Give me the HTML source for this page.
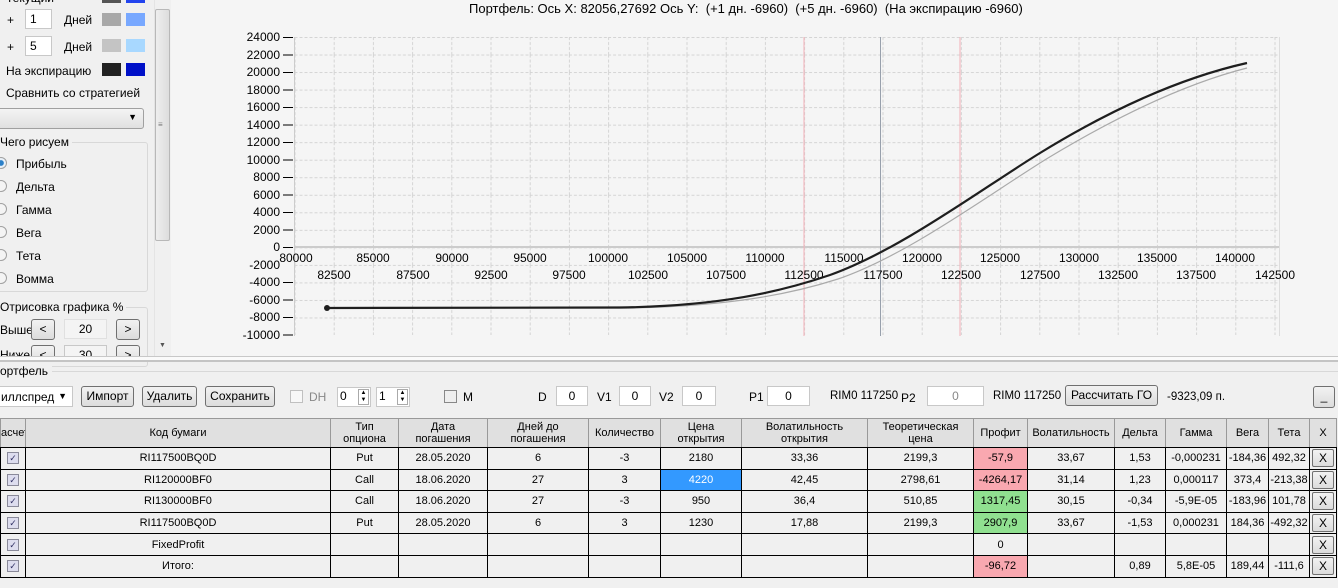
<!DOCTYPE html>
<html><head><meta charset="utf-8"><style>
*{box-sizing:border-box;margin:0;padding:0}
body{width:1338px;height:588px;overflow:hidden;background:#f0f0f0;font-family:"Liberation Sans",sans-serif;font-size:12px;color:#000;position:relative}
.a{position:absolute}
.sw{position:absolute;width:19px;height:13px}
.inp{position:absolute;background:#fff;border:1px solid #c8c8c8;height:20px;font-size:12px;padding:2px 4px}
.btn{position:absolute;border:1px solid #707070;border-radius:3px;background:linear-gradient(#f2f2f2,#dcdcdc);height:21px;font-size:12px;text-align:center;line-height:19px}
.rad{position:absolute;width:12px;height:12px;border:1px solid #a0a0a0;border-radius:50%;background:#f4f4f4}
table{position:absolute;left:0;top:418px;border-collapse:collapse;table-layout:fixed;font-size:11px}
td,th{border:1px solid #000;text-align:center;height:21.6px;background:#f0f0f0;font-weight:normal;overflow:hidden;white-space:nowrap;padding:0}
th{background:#e0e0e0;height:29px;line-height:12px;border-color:#999 #999 #000 #999}
.cb{display:inline-block;width:12px;height:12px;border:1px solid #8a8a9a;background:#dde;font-size:9px;line-height:10px;color:#336}
.xb{display:inline-block;width:22px;height:18px;border:1px solid #707070;border-radius:2px;background:linear-gradient(#f2f2f2,#dcdcdc);line-height:16px;font-size:12px}
.r{background:#f9a8b0}.g{background:#90e090}.b{background:#3399ff;color:#fff}
</style></head><body>
<div class="a" style="left:0;top:0;width:155px;height:356px;background:#f0f0f0"></div>
<div class="a" style="left:6px;top:-9px">Текущий</div>
<div class="sw" style="left:102px;top:-10px;background:#555"></div><div class="sw" style="left:126px;top:-10px;background:#2244ee"></div>
<div class="a" style="left:7px;top:13px">+</div><div class="inp" style="left:25px;top:9px;width:27px">1</div><div class="a" style="left:64px;top:13px">Дней</div>
<div class="sw" style="left:102px;top:13px;background:#a8a8a8"></div><div class="sw" style="left:126px;top:13px;background:#78a8ff"></div>
<div class="a" style="left:7px;top:40px">+</div><div class="inp" style="left:25px;top:36px;width:27px">5</div><div class="a" style="left:64px;top:40px">Дней</div>
<div class="sw" style="left:102px;top:39px;background:#c4c4c4"></div><div class="sw" style="left:126px;top:39px;background:#a8d8ff"></div>
<div class="a" style="left:6px;top:64px">На экспирацию</div>
<div class="sw" style="left:102px;top:63px;background:#222"></div><div class="sw" style="left:126px;top:63px;background:#0010c8"></div>
<div class="a" style="left:6px;top:86px">Сравнить со стратегией</div>
<div class="a" style="left:-3px;top:108px;width:147px;height:21px;border:1px solid #a0a0a0;border-radius:3px;background:linear-gradient(#f4f4f4,#e0e0e0)"><span class="a" style="right:6px;top:3px;font-size:9px">▼</span></div>
<div class="a" style="left:-3px;top:142px;width:151px;height:150px;border:1px solid #d8d8d8;border-radius:3px"></div>
<div class="a" style="left:0;top:135px;background:#f0f0f0;padding-right:3px">Чего рисуем</div>
<div class="rad" style="left:-5px;top:157px;background:radial-gradient(#2a7fc8 35%,#e8f0f8 45%)"></div><div class="a" style="left:16px;top:157px">Прибыль</div>
<div class="rad" style="left:-5px;top:180px"></div><div class="a" style="left:16px;top:180px">Дельта</div>
<div class="rad" style="left:-5px;top:203px"></div><div class="a" style="left:16px;top:203px">Гамма</div>
<div class="rad" style="left:-5px;top:226px"></div><div class="a" style="left:16px;top:226px">Вега</div>
<div class="rad" style="left:-5px;top:249px"></div><div class="a" style="left:16px;top:249px">Тета</div>
<div class="rad" style="left:-5px;top:272px"></div><div class="a" style="left:16px;top:272px">Вомма</div>
<div class="a" style="left:-3px;top:307px;width:151px;height:60px;border:1px solid #d8d8d8;border-radius:3px"></div>
<div class="a" style="left:0;top:300px;background:#f0f0f0;padding-right:3px">Отрисовка графика %</div>
<div class="a" style="left:0;top:323px">Выше</div><div class="btn" style="left:31px;top:319px;width:24px">&lt;</div><div class="inp" style="left:64px;top:319px;width:43px;text-align:center;background:#f4f4f4;border-color:#e0e0e0">20</div><div class="btn" style="left:116px;top:319px;width:24px">&gt;</div>
<div class="a" style="left:0;top:345px;height:11px;overflow:hidden;width:150px"><div class="a" style="top:3px">Ниже</div><div class="btn" style="left:31px;top:0;width:24px">&lt;</div><div class="inp" style="left:64px;top:0;width:43px;text-align:center;background:#f4f4f4">30</div><div class="btn" style="left:116px;top:0;width:24px">&gt;</div></div>
<div class="a" style="left:154px;top:0;width:17px;height:356px;background:#f0f0f0;border-left:1px solid #e4e4e4"></div>
<div class="a" style="left:155px;top:9px;width:15px;height:232px;border:1px solid #b8b8b8;border-radius:2px;background:linear-gradient(90deg,#eee,#ddd)"></div>
<div class="a" style="left:158px;top:120px;font-size:8px;color:#777">≡</div>
<div class="a" style="left:159px;top:342px;font-size:7px;color:#555">▼</div>
<div class="a" style="left:171px;top:0;width:1167px;height:356px;background:#f5f5f5"></div>
<div class="a" style="left:469px;top:1px;font-size:13px;white-space:pre">Портфель: Ось X: 82056,27692 Ось Y:  (+1 дн. -6960)  (+5 дн. -6960)  (На экспирацию -6960)</div>
<svg class="a" style="left:0;top:0" width="1338" height="356" font-family="Liberation Sans, sans-serif" font-size="12">
<defs><pattern id="gp" x="294.5" y="37" width="39.2" height="17.53" patternUnits="userSpaceOnUse">
<path d="M0.5 0V17.53M0 0.5H39.2" stroke="#d4d4d4" stroke-width="1" stroke-dasharray="3 2" fill="none"/></pattern></defs>
<rect x="294.5" y="37" width="985" height="298" fill="url(#gp)"/>
<line x1="294.5" y1="37" x2="294.5" y2="336" stroke="#ccc"/>
<line x1="294" y1="247" x2="1280" y2="247" stroke="#ccc" stroke-width="2"/>
<line x1="1279.5" y1="37" x2="1279.5" y2="336" stroke="#ddd"/>
<line x1="804" y1="37" x2="804" y2="336" stroke="#f4b0b8"/>
<line x1="960" y1="37" x2="960" y2="336" stroke="#f4b0b8"/>
<line x1="880.5" y1="37" x2="880.5" y2="336" stroke="#98a0ac"/>
<g text-anchor="end" fill="#000">
<text x="280" y="41">24000</text><text x="280" y="59">22000</text><text x="280" y="76">20000</text><text x="280" y="94">18000</text><text x="280" y="111">16000</text><text x="280" y="129">14000</text><text x="280" y="146">12000</text><text x="280" y="164">10000</text><text x="280" y="181">8000</text><text x="280" y="199">6000</text><text x="280" y="216">4000</text><text x="280" y="234">2000</text><text x="280" y="251">0</text><text x="280" y="269">-2000</text><text x="280" y="286">-4000</text><text x="280" y="304">-6000</text><text x="280" y="321">-8000</text><text x="280" y="339">-10000</text>
</g>
<path d="M283 37.5h10M283 55h10M283 72.5h10M283 90h10M283 107.5h10M283 125h10M283 142.5h10M283 160h10M283 177.5h10M283 195h10M283 212.5h10M283 230h10M283 247.5h10M283 282.5h10M283 300h10M283 317.5h10M283 335h10" stroke="#000"/>
<g text-anchor="middle">
<text x="296" y="262">80000</text><text x="373" y="262">85000</text><text x="452" y="262">90000</text><text x="530" y="262">95000</text><text x="608" y="262">100000</text><text x="687" y="262">105000</text><text x="765" y="262">110000</text><text x="844" y="262">115000</text><text x="922" y="262">120000</text><text x="1000" y="262">125000</text><text x="1079" y="262">130000</text><text x="1157" y="262">135000</text><text x="1235" y="262">140000</text>
<text x="334" y="279">82500</text><text x="413" y="279">87500</text><text x="491" y="279">92500</text><text x="569" y="279">97500</text><text x="648" y="279">102500</text><text x="726" y="279">107500</text><text x="804" y="279">112500</text><text x="883" y="279">117500</text><text x="961" y="279">122500</text><text x="1040" y="279">127500</text><text x="1118" y="279">132500</text><text x="1196" y="279">137500</text><text x="1275" y="279">142500</text>
</g>
<path fill="none" stroke="#aaa" stroke-width="1.2" d="M327,308 L630,308 C728,306 788,295 838,279 C908,255 988,195 1048,158 C1116,117 1184,84 1247,68"/>
<path fill="none" stroke="#1e1e1e" stroke-width="2.2" d="M327,308 L620,307.5 C720,306 780,292 830,275 C900,250 980,190 1040,153 C1110,110 1180,78 1247,63"/>
<circle cx="327" cy="308" r="3" fill="#1e1e1e"/>
</svg>
<div class="a" style="left:0;top:356px;width:1338px;height:6px;background:#fafafa;border-top:1px solid #c8c8c8;border-bottom:2px solid #c4c4c4"></div>
<div class="a" style="left:0;top:371px;width:1338px;border-top:1px solid #d8d8d8"></div>
<div class="a" style="left:0;top:364px;background:#f0f0f0;padding-right:4px">ортфель</div>
<div class="a" style="left:-3px;top:386px;width:76px;height:21px;border:1px solid #c8c8c8;background:#fff;padding:3px 0 0 3px">иллспред<span class="a" style="right:5px;top:4px;font-size:9px">▼</span></div>
<div class="btn" style="left:81px;top:386px;width:53px">Импорт</div>
<div class="btn" style="left:142px;top:386px;width:55px">Удалить</div>
<div class="btn" style="left:205px;top:386px;width:70px">Сохранить</div>
<div class="a" style="left:290px;top:390px;width:13px;height:13px;border:1px solid #c0c0c0;background:#f8f8f8"></div><div class="a" style="left:309px;top:390px;color:#888">DH</div>
<div class="inp" style="left:337px;top:387px;width:34px;padding:1px 2px">0<span class="a" style="right:1px;top:1px;width:11px;height:16px;border:1px solid #aaa;font-size:6px;line-height:7px;text-align:center">▲<br>▼</span></div>
<div class="inp" style="left:376px;top:387px;width:34px;padding:1px 2px">1<span class="a" style="right:1px;top:1px;width:11px;height:16px;border:1px solid #aaa;font-size:6px;line-height:7px;text-align:center">▲<br>▼</span></div>
<div class="a" style="left:444px;top:390px;width:13px;height:13px;border:1px solid #888;background:#eee"></div><div class="a" style="left:463px;top:390px">M</div>
<div class="a" style="left:538px;top:390px">D</div><div class="inp" style="left:556px;top:386px;width:32px;text-align:center">0</div>
<div class="a" style="left:597px;top:390px">V1</div><div class="inp" style="left:619px;top:386px;width:32px;text-align:center">0</div>
<div class="a" style="left:659px;top:390px">V2</div><div class="inp" style="left:682px;top:386px;width:34px;text-align:center">0</div>
<div class="a" style="left:749px;top:390px">P1</div><div class="inp" style="left:767px;top:386px;width:43px;text-align:center">0</div>
<div class="a" style="left:830px;top:390px;font-size:11.5px">RIM0 117250</div><div class="a" style="left:901px;top:391px">P2</div><div class="inp" style="left:927px;top:386px;width:57px;text-align:center;color:#888">0</div>
<div class="a" style="left:993px;top:390px;font-size:11.5px">RIM0 117250</div>
<div class="btn" style="left:1065px;top:385px;width:93px">Рассчитать ГО</div>
<div class="a" style="left:1167px;top:391px;font-size:11.5px">-9323,09 п.</div>
<div class="btn" style="left:1313px;top:386px;width:22px;height:22px">_</div>
<table style="width:1336px">
<colgroup><col style="width:25px"><col style="width:305px"><col style="width:68px"><col style="width:89px"><col style="width:101px"><col style="width:72px"><col style="width:81px"><col style="width:126px"><col style="width:106px"><col style="width:54px"><col style="width:87px"><col style="width:51px"><col style="width:61px"><col style="width:42px"><col style="width:41px"><col style="width:27px"></colgroup>
<tr><th>асчет</th><th>Код бумаги</th><th>Тип<br>опциона</th><th>Дата<br>погашения</th><th>Дней до<br>погашения</th><th>Количество</th><th>Цена<br>открытия</th><th>Волатильность<br>открытия</th><th>Теоретическая<br>цена</th><th>Профит</th><th>Волатильность</th><th>Дельта</th><th>Гамма</th><th>Вега</th><th>Тета</th><th>X</th></tr>
<tr><td><span class="cb">✓</span></td><td>RI117500BQ0D</td><td>Put</td><td>28.05.2020</td><td>6</td><td>-3</td><td>2180</td><td>33,36</td><td>2199,3</td><td class="r">-57,9</td><td>33,67</td><td>1,53</td><td>-0,000231</td><td>-184,36</td><td>492,32</td><td><span class="xb">X</span></td></tr>
<tr><td><span class="cb">✓</span></td><td>RI120000BF0</td><td>Call</td><td>18.06.2020</td><td>27</td><td>3</td><td class="b">4220</td><td>42,45</td><td>2798,61</td><td class="r">-4264,17</td><td>31,14</td><td>1,23</td><td>0,000117</td><td>373,4</td><td>-213,38</td><td><span class="xb">X</span></td></tr>
<tr><td><span class="cb">✓</span></td><td>RI130000BF0</td><td>Call</td><td>18.06.2020</td><td>27</td><td>-3</td><td>950</td><td>36,4</td><td>510,85</td><td class="g">1317,45</td><td>30,15</td><td>-0,34</td><td>-5,9E-05</td><td>-183,96</td><td>101,78</td><td><span class="xb">X</span></td></tr>
<tr><td><span class="cb">✓</span></td><td>RI117500BQ0D</td><td>Put</td><td>28.05.2020</td><td>6</td><td>3</td><td>1230</td><td>17,88</td><td>2199,3</td><td class="g">2907,9</td><td>33,67</td><td>-1,53</td><td>0,000231</td><td>184,36</td><td>-492,32</td><td><span class="xb">X</span></td></tr>
<tr><td><span class="cb">✓</span></td><td>FixedProfit</td><td></td><td></td><td></td><td></td><td></td><td></td><td></td><td>0</td><td></td><td></td><td></td><td></td><td></td><td><span class="xb">X</span></td></tr>
<tr><td><span class="cb">✓</span></td><td>Итого:</td><td></td><td></td><td></td><td></td><td></td><td></td><td></td><td class="r">-96,72</td><td></td><td>0,89</td><td>5,8E-05</td><td>189,44</td><td>-111,6</td><td><span class="xb">X</span></td></tr>
</table>
</body></html>
